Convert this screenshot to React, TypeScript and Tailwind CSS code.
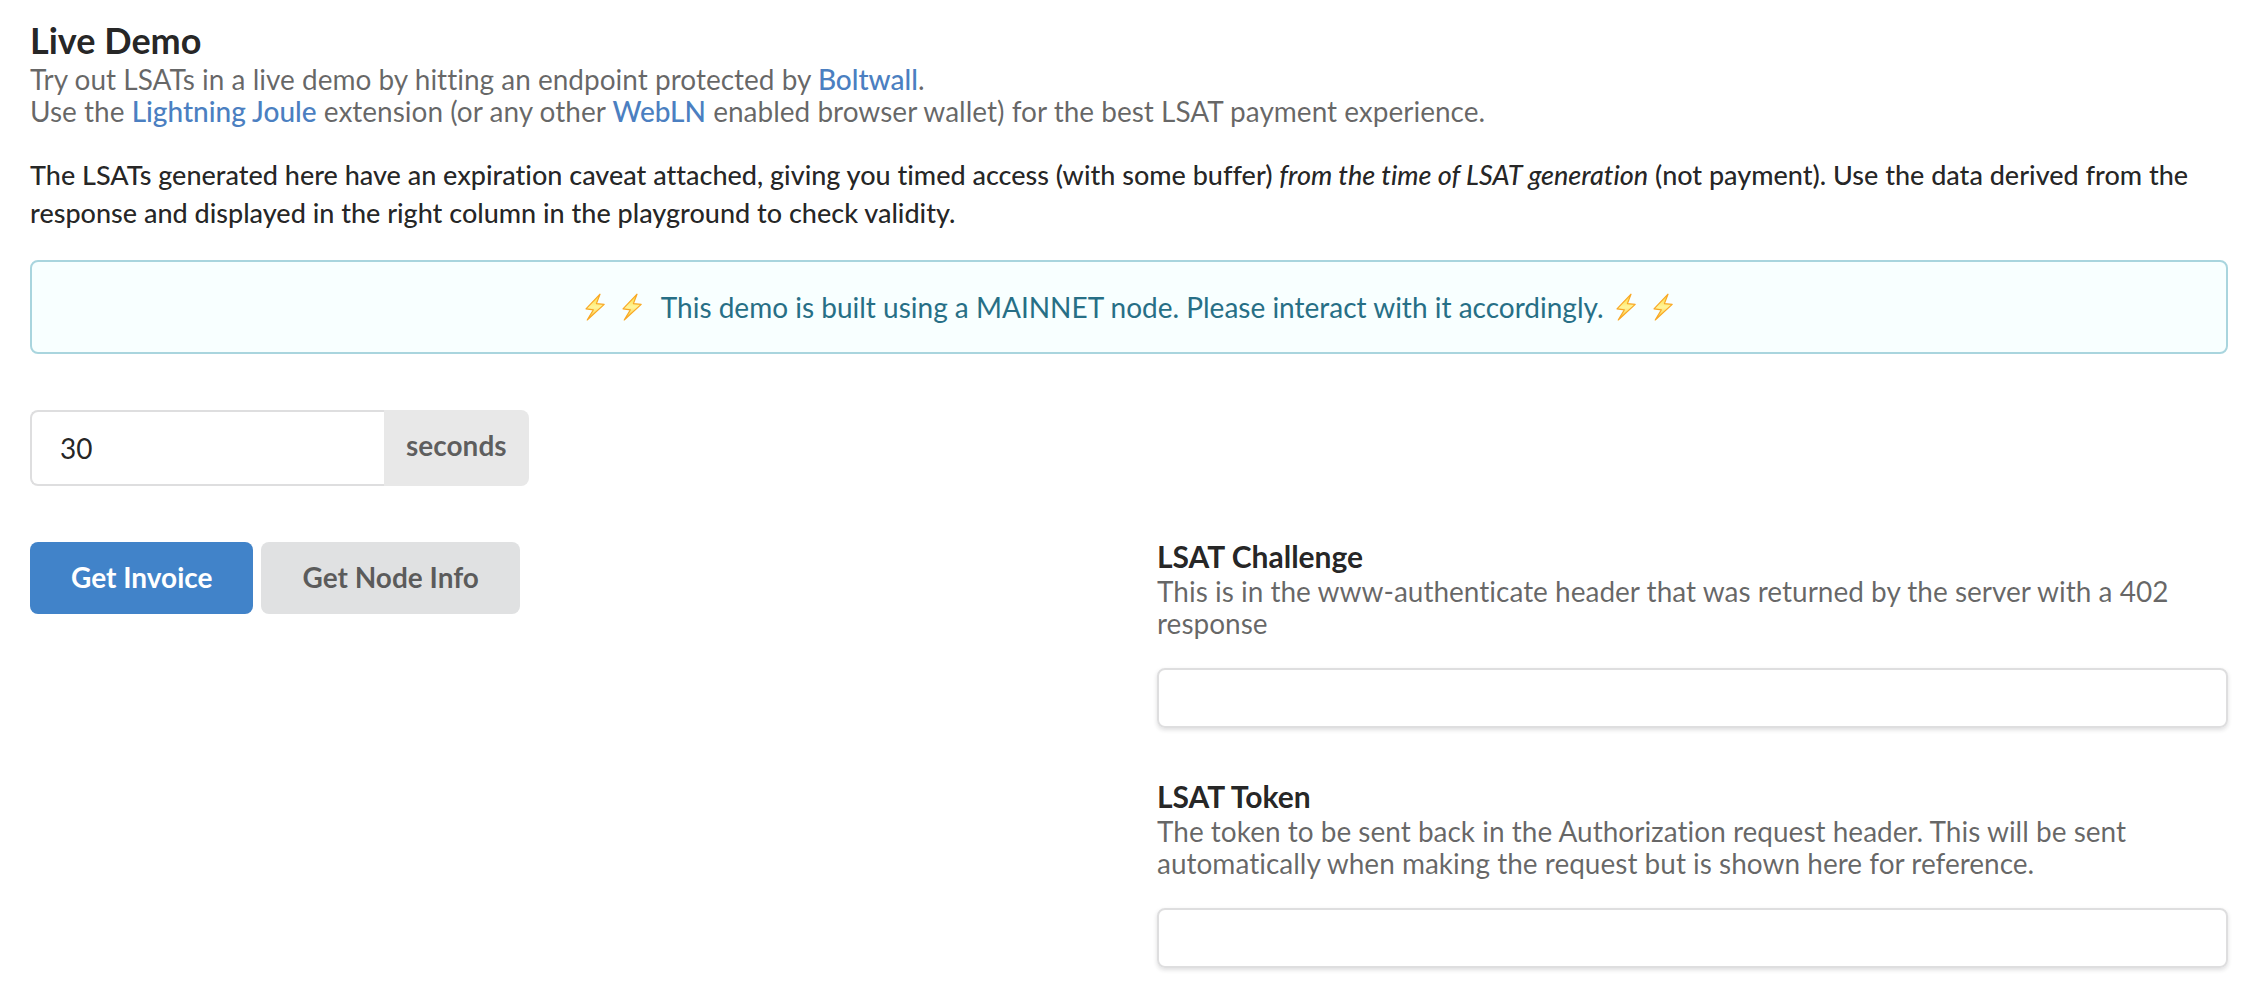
import { useState } from "react";
import type { ReactNode } from "react";

const Bolt = () => (
    <svg viewBox="0 0 30 30" className="inline-block size-[30px] align-[-4px]" aria-hidden="true">
        <defs>
            <linearGradient id="bolt" x1="0" y1="0" x2="0" y2="1">
                <stop offset="0" stopColor="#fdd835" />
                <stop offset="0.5" stopColor="#fff59a" />
                <stop offset="1" stopColor="#fbc02d" />
            </linearGradient>
        </defs>
        <path
            d="M20 2.2 L6 16.8 L13.4 17.8 L7.2 28 L24.2 12.4 L16.4 11.6 Z"
            fill="url(#bolt)"
            stroke="#f9a825"
            strokeWidth="1.2"
            strokeLinejoin="round"
        />
    </svg>
);

const TextLink = ({ href, children }: { href: string; children: ReactNode }) => (
    <a href={href} className="text-[#4b7fc1] font-medium">
        {children}
    </a>
);

type FieldProps = { id: string; title: string; description: string };

const TokenField = ({ id, title, description }: FieldProps) => (
    <div>
        <label htmlFor={id} className="block text-[30px] leading-7 font-bold mb-[5px]">
            {title}
        </label>
        <p className="leading-8 text-black/60">{description}</p>
        <input
            id={id}
            readOnly
            className="block w-full h-15 mt-[29px] px-7 border-2 border-[#dededf] rounded-lg shadow-[0_2px_4px_rgba(34,36,38,0.15)]"
        />
    </div>
);

const App = () => {
    const [time, setTime] = useState<string>("30");

    return (
        <main className="font-[Lato,sans-serif] text-[28px] leading-[38px] text-black/87 pl-[30px] pr-9 pt-[18px] pb-7 [font-variant-ligatures:none]">
            <h1 className="text-[36px] leading-[45px] font-bold">Live Demo</h1>
            <p className="leading-8 text-black/60">
                Try out LSATs in a live demo by hitting an endpoint protected by{" "}
                <TextLink href="#boltwall">Boltwall</TextLink>.
                <br />
                Use the <TextLink href="#joule">Lightning Joule</TextLink> extension (or any other{" "}
                <TextLink href="#webln">WebLN</TextLink> enabled browser wallet) for the best LSAT payment experience.
            </p>
            <p className="mt-[29px] text-[27px] font-medium">
                The LSATs generated here have an expiration caveat attached, giving you timed access (with some buffer){" "}
                <em>from the time of LSAT generation</em> (not payment). Use the data derived from the response and
                displayed in the right column in the playground to check validity.
            </p>
            <div className="mt-7 py-[26px] border-2 border-[#a9d5de] rounded-lg bg-[#f8ffff] text-[#276f86] text-center">
                <Bolt /> <Bolt /> &nbsp;This demo is built using a MAINNET node. Please interact with it accordingly.{" "}
                <Bolt /> <Bolt />
            </div>
            <div className="mt-14 flex h-19">
                <input
                    id="time"
                    type="text"
                    value={time}
                    onChange={(e) => setTime(e.target.value)}
                    className="w-[354px] px-7 border-2 border-r-0 border-[#dededf] rounded-l-lg outline-none"
                />
                <label
                    htmlFor="time"
                    className="flex items-center px-[22px] pb-1.5 rounded-r-lg bg-[#e8e8e8] font-bold text-black/60"
                >
                    seconds
                </label>
            </div>
            <div className="mt-14 grid grid-cols-2 gap-14">
                <div className="flex items-start gap-2">
                    <button className="h-18 px-[41px] pb-0.5 rounded-lg bg-[#4183c9] text-white font-bold">
                        Get Invoice
                    </button>
                    <button className="h-18 px-[41px] pb-0.5 rounded-lg bg-[#e0e1e2] text-black/60 font-bold">
                        Get Node Info
                    </button>
                </div>
                <div className="flex flex-col gap-[54px]">
                    <TokenField
                        id="challenge"
                        title="LSAT Challenge"
                        description="This is in the www-authenticate header that was returned by the server with a 402 response"
                    />
                    <TokenField
                        id="token"
                        title="LSAT Token"
                        description="The token to be sent back in the Authorization request header. This will be sent automatically when making the request but is shown here for reference."
                    />
                </div>
            </div>
        </main>
    );
};

export default App;
